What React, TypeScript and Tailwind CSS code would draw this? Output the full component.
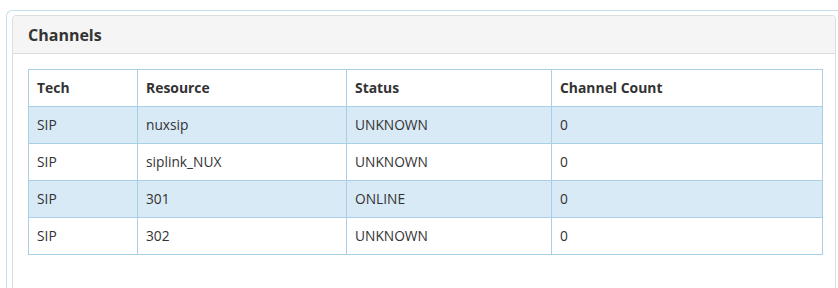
import React from "react";

const rows = [
  ["SIP", "nuxsip", "UNKNOWN", "0"],
  ["SIP", "siplink_NUX", "UNKNOWN", "0"],
  ["SIP", "301", "ONLINE", "0"],
  ["SIP", "302", "UNKNOWN", "0"],
];

export default function App() {
  return (
    <div
      className="w-[838px] h-[288px] overflow-hidden bg-white text-[#333]"
      style={{ fontFamily: '"Open Sans", "Noto Sans", sans-serif' }}
    >
      <div className="ml-[6px] mt-[10px] w-[840px] h-[300px] border-l border-t border-[#c4dfee] rounded-tl-[6px] pl-[5px] pt-[4px]">
        <div className="w-[824px] h-[300px] border border-[#dddddd] rounded-[4px]">
          <div className="h-[38px] bg-[#f5f5f5] border-b border-[#dddddd] pl-[15px] flex items-center rounded-t-[4px]">
            <span className="text-[16px] font-bold text-[#333]">Channels</span>
          </div>
          <div className="pl-[15px] pt-[15px]">
            <table className="w-[794px] border-collapse text-[13.75px] table-fixed">
              <colgroup>
                <col className="w-[109px]" />
                <col className="w-[209px]" />
                <col className="w-[205px]" />
                <col className="w-[271px]" />
              </colgroup>
              <thead>
                <tr className="h-[37px]">
                  {["Tech", "Resource", "Status", "Channel Count"].map((h) => (
                    <th
                      key={h}
                      className="border border-[#a9cfe6] text-left font-bold text-[13.9px] pl-[8px] align-middle"
                    >
                      {h}
                    </th>
                  ))}
                </tr>
              </thead>
              <tbody>
                {rows.map((r, i) => (
                  <tr key={i} className={i % 2 === 0 ? "h-[37px] bg-[#d9eaf7]" : "h-[37px] bg-white"}>
                    {r.map((c, j) => (
                      <td key={j} className="border border-[#a9cfe6] pl-[8px] align-middle">
                        {c}
                      </td>
                    ))}
                  </tr>
                ))}
              </tbody>
            </table>
          </div>
        </div>
      </div>
    </div>
  );
}
